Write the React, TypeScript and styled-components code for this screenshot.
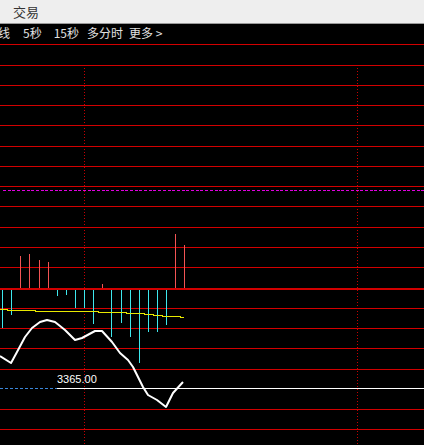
import React from "react";
import styled, { createGlobalStyle } from "styled-components";

const Global = createGlobalStyle`
  html, body { margin: 0; padding: 0; background: #000; }
  body { width: 424px; height: 445px; overflow: hidden; font-family: "Noto Sans CJK SC", "Noto Sans", sans-serif; }
`;

const Page = styled.div`
  width: 424px;
  height: 445px;
  display: flex;
  flex-direction: column;
  background: #000;
  overflow: hidden;
`;

const Header = styled.div`
  height: 23px;
  flex: none;
  background: #eeeeee;
  border-bottom: 1px solid #9a9a9a;
  display: flex;
  align-items: center;
  padding-left: 13px;
  font-size: 13px;
  color: #333;
  font-family: "Noto Sans CJK SC", sans-serif;
`;

const Toolbar = styled.div`
  height: 17px;
  flex: none;
  display: flex;
  align-items: center;
  margin-left: -2px;
  font-size: 12px;
  color: #e0e0e0;
  white-space: nowrap;
  font-family: "Noto Sans CJK SC", sans-serif;
`;

const ToolItem = styled.span<{ $left?: number }>`
  display: inline-block;
  margin-left: ${(p) => p.$left ?? 0}px;
`;

const Chart = styled.svg`
  display: block;
  flex: none;
`;

const RED = "#d20000";
const gridYs = [44, 65, 85, 105, 125, 146, 166, 186, 206, 227, 247, 267, 308, 328, 348, 369, 409, 429];

const upBars: [number, number][] = [
  [20, 256], [29, 254], [39, 260], [48, 262], [102, 284], [175, 234], [184, 245],
];
const downBars: [number, number][] = [
  [2, 328], [11, 315], [57, 296], [66, 295], [75, 308], [84, 308], [93, 324],
  [111, 337], [121, 323], [130, 337], [139, 363], [148, 332], [157, 332], [166, 325],
];

const yellow = "0,309 7,309 7,310 35,310 35,311 98,311 98,312 126,312 126,313 144,313 144,314 153,314 153,315 162,315 162,316 180,316 180,317 184,317";

const white =
  "0,356 11,363 17,352 25,337 32,328 40,322 47,320 55,322 65,330 75,340 82,338 95,331 102,331 112,342 120,353 128,360 133,367 143,387 148,395 157,400 166,407 173,393 183,382";

export default function App() {
  return (
    <Page>
      <Global />
      <Header>交易</Header>
      <Toolbar>
        <ToolItem>线</ToolItem>
        <ToolItem $left={13}>5秒</ToolItem>
        <ToolItem $left={12}>15秒</ToolItem>
        <ToolItem $left={8}>多分时</ToolItem>
        <ToolItem $left={6}>更多 &gt;</ToolItem>
      </Toolbar>
      <Chart width={424} height={404} viewBox="0 41 424 404">
        <g shapeRendering="crispEdges">
          {gridYs.map((y) => (
            <line key={y} x1={0} x2={424} y1={y + 0.5} y2={y + 0.5} stroke={RED} strokeWidth={1} />
          ))}
          <line x1={0} x2={424} y1={289} y2={289} stroke={RED} strokeWidth={2} />
          <line x1={3} x2={424} y1={190.5} y2={190.5} stroke="#e000e0" strokeWidth={1} strokeDasharray="3 1.7" />
          <line x1={84.5} x2={84.5} y1={68} y2={445} stroke="#c80000" strokeWidth={1} strokeDasharray="1 2" />
          <line x1={357.5} x2={357.5} y1={68} y2={445} stroke="#c80000" strokeWidth={1} strokeDasharray="1 2" />
          {upBars.map(([x, top]) => (
            <line key={"u" + x} x1={x + 0.5} x2={x + 0.5} y1={top} y2={288} stroke="#f25454" strokeWidth={1} />
          ))}
          {downBars.map(([x, bot]) => (
            <line key={"d" + x} x1={x + 0.5} x2={x + 0.5} y1={290} y2={bot} stroke="#3ee8ee" strokeWidth={1} />
          ))}
          <polyline points={yellow} transform="translate(0,0.5)" fill="none" stroke="#e8e800" strokeWidth={1} />
          <line x1={0} x2={57} y1={388.5} y2={388.5} stroke="#3a86d8" strokeWidth={1} strokeDasharray="3 2" />
          <line x1={57} x2={424} y1={388.5} y2={388.5} stroke="#ffffff" strokeWidth={1} />
        </g>
        <polyline points={white} fill="none" stroke="#ffffff" strokeWidth={2} strokeLinejoin="round" />
        <text x={57} y={383} fill="#ffffff" fontSize={11} fontFamily="'Liberation Sans', Arial, sans-serif">
          3365.00
        </text>
      </Chart>
    </Page>
  );
}
